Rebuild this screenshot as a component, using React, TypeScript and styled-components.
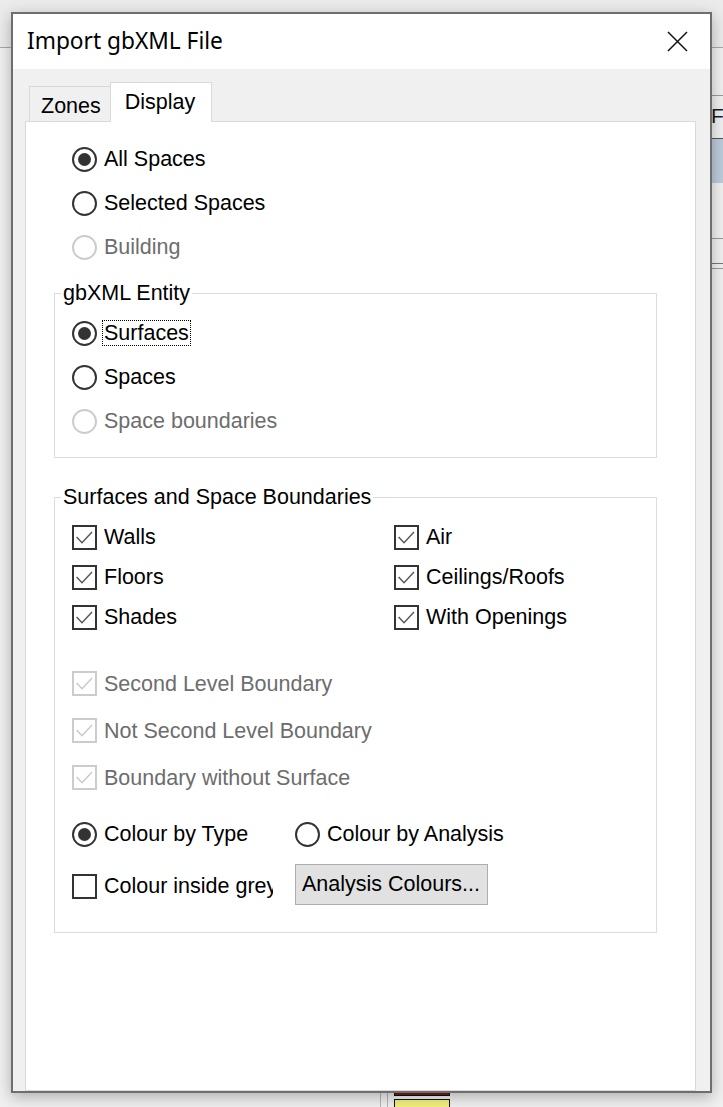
import React from 'react';
import styled, { createGlobalStyle } from 'styled-components';

const GlobalStyle = createGlobalStyle`
    html, body {
        margin: 0;
        padding: 0;
        background: #f0f0f0;
        overflow: hidden;
    }
    * { box-sizing: border-box; }
`;

const UI_FONT = `"Liberation Sans", Arial, sans-serif`;
const TITLE_FONT = `"Noto Sans", "Open Sans", sans-serif`;

// ---- the application window behind the dialog ----

const Desktop = styled.div`
    position: relative;
    width: 723px;
    height: 1107px;
    overflow: hidden;
    background: #f0f0f0;
    font-family: ${UI_FONT};
`;

const BackTop = styled.div`
    position: absolute;
    left: 0;
    top: 0;
    width: 723px;
    height: 48px;
    background: #ebebeb;
    border-bottom: 1px solid #a9a9a9;
`;

const BackRule = styled.div<{ $top: number; $color: string }>`
    position: absolute;
    left: 700px;
    right: 0;
    top: ${p => p.$top}px;
    height: 1px;
    background: ${p => p.$color};
`;

const BackCaption = styled.div`
    position: absolute;
    left: 711px;
    top: 104px;
    font-size: 21px;
    color: #1a1a1a;
`;

const BackBand = styled.div`
    position: absolute;
    left: 700px;
    right: 0;
    top: 139px;
    height: 44px;
    background: #bccbdb;
`;

const BackVLine = styled.div<{ $left: number }>`
    position: absolute;
    left: ${p => p.$left}px;
    top: 1080px;
    width: 1px;
    height: 30px;
    background: #b5b5b5;
`;

const Swatch = styled.div<{ $top: number; $color: string }>`
    position: absolute;
    left: 394px;
    top: ${p => p.$top}px;
    width: 56px;
    height: 14px;
    background: ${p => p.$color};
    border: 1px solid #111;
`;

// ---- dialog ----

const Dialog = styled.div`
    position: absolute;
    left: 11px;
    top: 12px;
    width: 701px;
    height: 1081px;
    border: 2px solid #6e6e6e;
    background: #f0f0f0;
    box-shadow: 0 4px 14px rgba(0, 0, 0, 0.28);
    display: flex;
    flex-direction: column;
`;

const TitleBar = styled.div`
    height: 55px;
    flex-shrink: 0;
    background: #ffffff;
    display: flex;
    align-items: center;
    justify-content: space-between;
    padding-left: 14px;
`;

const Title = styled.div`
    font-family: ${TITLE_FONT};
    font-size: 22.7px;
    color: #000;
    margin-top: -3px;
`;

const CloseButton = styled.div`
    width: 66px;
    height: 55px;
    display: flex;
    align-items: center;
    justify-content: center;
`;

const Body = styled.div`
    flex: 1;
    display: flex;
    flex-direction: column;
    padding: 13px 14px 0 12px;
`;

const TabStrip = styled.div`
    display: flex;
    align-items: flex-end;
    height: 40px;
    padding-left: 4px;
    margin-bottom: -1px;
    position: relative;
    z-index: 1;
`;

const Tab = styled.div<{ $active?: boolean }>`
    height: ${p => (p.$active ? 40 : 35)}px;
    margin-bottom: ${p => (p.$active ? 0 : 1)}px;
    padding: ${p => (p.$active ? '0 16px 0 14px' : '4px 9px 0 11px')};
    background: ${p => (p.$active ? '#ffffff' : '#f0f0f0')};
    border: 1px solid #d9d9d9;
    border-bottom: none;
    ${p => (p.$active ? '' : 'border-right: none;')}
    display: flex;
    align-items: center;
    font-size: 21.5px;
    color: #000;
`;

const TabPage = styled.div`
    flex: 1;
    background: #ffffff;
    border: 1px solid #d9d9d9;
    padding: 15px 38px 0 28px;
    display: flex;
    flex-direction: column;
`;

const OptionList = styled.div`
    display: flex;
    flex-direction: column;
    padding-left: 18px;
`;

const Group = styled.fieldset<{ $top: number; $pt: number; $pb: number }>`
    margin: ${p => p.$top}px 0 0 0;
    padding: ${p => p.$pt}px 0 ${p => p.$pb}px 17px;
    border: 1px solid #dcdcdc;
    min-width: 0;
`;

const Legend = styled.legend`
    margin-left: -11px;
    padding: 0 2px;
    font-size: 21.5px;
    line-height: 24px;
    color: #000;
`;

const Row = styled.div<{ $h: number; $mt?: number }>`
    height: ${p => p.$h}px;
    margin-top: ${p => p.$mt ?? 0}px;
    display: flex;
    align-items: center;
`;

const CheckGrid = styled.div`
    display: grid;
    grid-template-columns: 322px 1fr;
    grid-auto-rows: 40px;
    align-items: center;
`;

const Item = styled.div<{ $width?: number }>`
    display: flex;
    align-items: center;
    gap: 5px;
    ${p => (p.$width ? `width: ${p.$width}px; overflow: hidden; flex-shrink: 0;` : '')}
    white-space: nowrap;
`;

const RadioCircle = styled.span<{ $disabled?: boolean }>`
    width: 25px;
    height: 25px;
    flex-shrink: 0;
    border-radius: 50%;
    border: 2px solid ${p => (p.$disabled ? '#cccccc' : '#333333')};
    display: flex;
    align-items: center;
    justify-content: center;
`;

const RadioDot = styled.span`
    width: 13px;
    height: 13px;
    border-radius: 50%;
    background: #333333;
`;

const CheckBoxSquare = styled.span<{ $disabled?: boolean }>`
    width: 25px;
    height: 25px;
    flex-shrink: 0;
    border: 2px solid ${p => (p.$disabled ? '#cccccc' : '#333333')};
    display: flex;
    align-items: center;
    justify-content: center;
`;

const Label = styled.span<{ $disabled?: boolean; $focused?: boolean }>`
    font-size: 21.5px;
    line-height: 24px;
    padding: 0 1px;
    border: 1px ${p => (p.$focused ? 'dotted #000' : 'solid transparent')};
    color: ${p => (p.$disabled ? '#6d6d6d' : '#000')};
`;

const PushButton = styled.div`
    width: 193px;
    height: 41px;
    margin-left: 22px;
    align-self: flex-start;
    background: #e1e1e1;
    border: 1px solid #adadad;
    display: flex;
    align-items: center;
    padding-left: 6px;
    font-size: 21.5px;
    color: #000;
    white-space: nowrap;
`;

interface OptionProps {
    label: string;
    checked?: boolean;
    disabled?: boolean;
    focused?: boolean;
    width?: number;
}

const Radio = ({ label, checked, disabled, focused, width }: OptionProps) => (
    <Item $width={width}>
        <RadioCircle $disabled={disabled}>{checked && <RadioDot />}</RadioCircle>
        <Label $disabled={disabled} $focused={focused}>{label}</Label>
    </Item>
);

const CheckBox = ({ label, checked, disabled, width }: OptionProps) => (
    <Item $width={width}>
        <CheckBoxSquare $disabled={disabled}>
            {checked && (
                <svg width="21" height="21" viewBox="0 0 21 21">
                    <polyline
                        points="2.6,10 8,15.8 18,5"
                        fill="none"
                        stroke={disabled ? '#c8c8c8' : '#555555'}
                        strokeWidth="1.4"
                    />
                </svg>
            )}
        </CheckBoxSquare>
        <Label $disabled={disabled}>{label}</Label>
    </Item>
);

const CloseIcon = () => (
    <svg width="21" height="21" viewBox="0 0 21 21">
        <path d="M1 1 L20 20 M20 1 L1 20" stroke="#111" strokeWidth="1.5" fill="none" />
    </svg>
);

export default function App() {
    return (
        <>
            <GlobalStyle />
            <Desktop>
                <BackTop />
                <BackRule $top={95} $color="#9a9a9a" />
                <BackCaption>File</BackCaption>
                <BackRule $top={138} $color="#555555" />
                <BackBand />
                <BackRule $top={238} $color="#9a9a9a" />
                <BackRule $top={263} $color="#777777" />
                <BackRule $top={268} $color="#9a9a9a" />
                <BackVLine $left={380} />
                <BackVLine $left={387} />
                <Swatch $top={1082} $color="#7a1a1a" />
                <Swatch $top={1099} $color="#f2f07c" />

                <Dialog>
                    <TitleBar>
                        <Title>Import gbXML File</Title>
                        <CloseButton><CloseIcon /></CloseButton>
                    </TitleBar>
                    <Body>
                        <TabStrip>
                            <Tab>Zones</Tab>
                            <Tab $active>Display</Tab>
                        </TabStrip>
                        <TabPage>
                            <OptionList>
                                <Row $h={44}><Radio label="All Spaces" checked /></Row>
                                <Row $h={44}><Radio label="Selected Spaces" /></Row>
                                <Row $h={44}><Radio label="Building" disabled /></Row>
                            </OptionList>

                            <Group $top={12} $pt={6} $pb={14}>
                                <Legend>gbXML Entity</Legend>
                                <Row $h={44}><Radio label="Surfaces" checked focused /></Row>
                                <Row $h={44}><Radio label="Spaces" /></Row>
                                <Row $h={44}><Radio label="Space boundaries" disabled /></Row>
                            </Group>

                            <Group $top={27} $pt={8} $pb={24}>
                                <Legend>Surfaces and Space Boundaries</Legend>
                                <CheckGrid>
                                    <CheckBox label="Walls" checked />
                                    <CheckBox label="Air" checked />
                                    <CheckBox label="Floors" checked />
                                    <CheckBox label="Ceilings/Roofs" checked />
                                    <CheckBox label="Shades" checked />
                                    <CheckBox label="With Openings" checked />
                                </CheckGrid>
                                <Row $h={47} $mt={23}><CheckBox label="Second Level Boundary" checked disabled /></Row>
                                <Row $h={47}><CheckBox label="Not Second Level Boundary" checked disabled /></Row>
                                <Row $h={47}><CheckBox label="Boundary without Surface" checked disabled /></Row>
                                <Row $h={44} $mt={11}>
                                    <Radio label="Colour by Type" checked width={223} />
                                    <Radio label="Colour by Analysis" />
                                </Row>
                                <Row $h={44} $mt={8}>
                                    <CheckBox label="Colour inside grey" width={201} />
                                    <PushButton>Analysis Colours...</PushButton>
                                </Row>
                            </Group>
                        </TabPage>
                    </Body>
                </Dialog>
            </Desktop>
        </>
    );
}
